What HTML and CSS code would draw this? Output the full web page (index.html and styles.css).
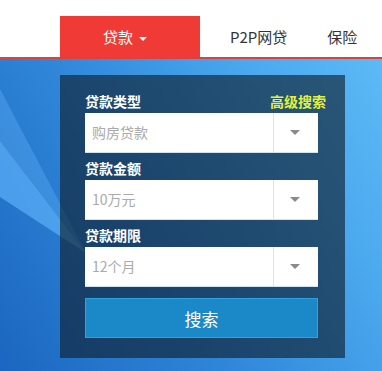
FILE: index.html
```html
<!DOCTYPE html>
<html lang="zh-CN">
<head>
    <meta charset="UTF-8">
    <meta name="viewport" content="width=device-width, initial-scale=1.0">
    <title>贷款搜索</title>
    <link rel="stylesheet" href="styles.css">
</head>
<body>
    <div class="header">
        <ul class="nav">
            <li class="nav-item active">贷款<span class="caret"></span></li>
            <li class="nav-item">P2P网贷</li>
            <li class="nav-item">保险</li>
        </ul>
    </div>

    <div class="banner">
        <div class="search-box">
            <div class="field-label">
                <span>贷款类型</span>
                <a class="advanced" href="#">高级搜索</a>
            </div>
            <div class="select">
                <span class="select-text">购房贷款</span>
                <span class="select-arrow"></span>
            </div>

            <div class="field-label"><span>贷款金额</span></div>
            <div class="select">
                <span class="select-text">10万元</span>
                <span class="select-arrow"></span>
            </div>

            <div class="field-label"><span>贷款期限</span></div>
            <div class="select">
                <span class="select-text">12个月</span>
                <span class="select-arrow"></span>
            </div>

            <button class="search-btn">搜索</button>
        </div>
    </div>
</body>
</html>
```

FILE: styles.css
```css
* {
    box-sizing: border-box;
}
body {
    margin: 0;
    font-family: "Noto Sans CJK SC", "Noto Sans", sans-serif;
    background: #fff;
    overflow: hidden;
}
.header {
    height: 59px;
    padding-top: 16px;
    border-bottom: 2px solid #d9433f;
    background: #fff;
}
.nav {
    list-style: none;
    margin: 0 0 0 60px;
    padding: 0;
    display: flex;
    gap: 40px;
}
.nav-item {
    height: 41px;
    line-height: 41px;
    font-size: 15px;
    color: #333;
}
.nav-item.active {
    width: 140px;
    margin-right: -10px;
    padding-left: 43px;
    background: #f03a35;
    color: #fff;
}
.caret {
    display: inline-block;
    margin-left: 6px;
    vertical-align: middle;
    border-top: 4px solid #fff;
    border-left: 4px solid transparent;
    border-right: 4px solid transparent;
}
.banner {
    position: relative;
    height: 312px;
    padding: 16px 0 0 60px;
    background: linear-gradient(60deg, #1b66c0 0%, #2f86d8 40%, #4aa8ee 75%, #5dbaf6 100%);
}
/* light rays on the left */
.banner::before {
    content: "";
    position: absolute;
    left: 0;
    top: 0;
    width: 90px;
    height: 260px;
    background: rgba(110, 190, 255, 0.3);
    clip-path: polygon(0 30px, 86px 194px, 0 82px);
}
.banner::after {
    content: "";
    position: absolute;
    left: 0;
    top: 0;
    width: 90px;
    height: 260px;
    background: rgba(100, 185, 255, 0.6);
    clip-path: polygon(0 82px, 86px 194px, 0 138px);
}
.search-box {
    position: relative;
    z-index: 1;
    width: 285px;
    height: 283px;
    padding: 11px 27px 20px 25px;
    background: rgba(16, 31, 47, 0.64);
}
.field-label {
    display: flex;
    justify-content: space-between;
    height: 25px;
    padding-top: 5px;
    margin-bottom: 2px;
    line-height: 20px;
    font-size: 14px;
    font-weight: bold;
    color: #fff;
}
.advanced {
    margin-right: -8px;
    color: #e2f23c;
    text-decoration: none;
}
.select {
    display: flex;
    height: 40px;
    background: #fff;
    border-bottom: 1px solid #cfe3f2;
}
.select-text {
    flex: 1;
    padding-left: 7px;
    line-height: 39px;
    font-size: 14px;
    color: #aaa;
}
.select-arrow {
    position: relative;
    width: 45px;
    border-left: 1px solid #e2e2e2;
}
.select-arrow::after {
    content: "";
    position: absolute;
    left: 16px;
    top: 17px;
    border-top: 5px solid #8a8a8a;
    border-left: 5px solid transparent;
    border-right: 5px solid transparent;
}
.search-btn {
    display: block;
    width: 100%;
    height: 40px;
    margin-top: 11px;
    border: 1px solid #2ea2e2;
    background: #1b88c8;
    color: #fff;
    font-family: inherit;
    font-size: 17px;
    cursor: pointer;
}
```
